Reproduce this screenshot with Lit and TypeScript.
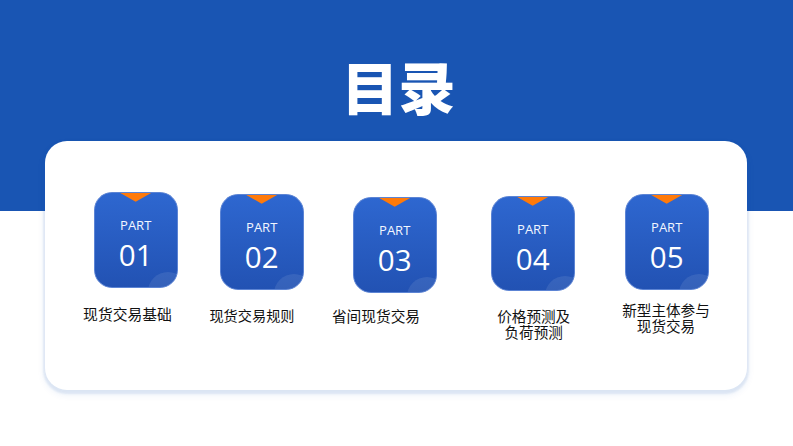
import { LitElement, html, css } from "lit";
import { customElement } from "lit/decorators.js";

interface Part { no: string; text: string; gap: number; top: number; h: number; labelGap: number; shift: number; size: number }

const PARTS: Part[] = [
  { no: "01", text: "现货交易基础", gap: 48.7, top: 50.7, h: 96, labelGap: 18, shift: -8.2, size: 14.8 },
  { no: "02", text: "现货交易规则", gap: 42, top: 52.7, h: 96, labelGap: 17, shift: -9.7, size: 14.2 },
  { no: "03", text: "省间现货交易", gap: 49, top: 55.7, h: 96, labelGap: 15, shift: -18.7, size: 14.7 },
  { no: "04", text: "价格预测及\n负荷预测", gap: 54, top: 54.7, h: 95, labelGap: 17, shift: 1, size: 14.6 },
  { no: "05", text: "新型主体参与\n现货交易", gap: 50, top: 52.7, h: 96, labelGap: 12, shift: -0.7, size: 14.6 },
];

@customElement("app-root")
export class AppRoot extends LitElement {
  static styles = css`
    :host { display: block; width: 793px; height: 446px; overflow: hidden; font-family: "Noto Sans CJK SC", "Open Sans", sans-serif; }
    .page { height: 446px; background: linear-gradient(#1955b3 211px, #fff 211px); display: flex; flex-direction: column; }
    .title { height: 141px; flex: none; display: flex; align-items: flex-start; justify-content: center; padding-left: 4px; padding-top: 55px; box-sizing: border-box; }
    h1 { margin: 0; color: #fff; font-size: 57px; line-height: 60px; font-weight: 900; }
    .card { margin-left: 45px; width: 702px; height: 249px; flex: none; background: #fff; border-radius: 22px;
      box-shadow: 0 2px 2px 2px rgba(25,85,179,.1), 0 4px 6px 2px rgba(25,85,179,.06); display: flex; align-items: flex-start; }
    .item { width: 84px; flex: none; display: flex; flex-direction: column; align-items: center; }
    .tile { width: 84px; flex: none; box-sizing: border-box; position: relative; overflow: hidden; border-radius: 18px;
      background: linear-gradient(#2e67d0, #2252b3); border: 1px solid #5c84d4; color: #fff;
      display: flex; flex-direction: column; align-items: center; font-family: "Open Sans", sans-serif; padding-top: 23px; }
    .tri { position: absolute; top: 0; left: 25px; width: 32px; height: 9px; background: #ff7a0a; clip-path: polygon(0 0, 100% 0, 50% 100%); }
    .blob { position: absolute; left: 53px; top: 79px; width: 40px; height: 40px; border-radius: 50%; background: rgba(255,255,255,.09); }
    .part { font-size: 13px; line-height: 18px; color: #f2f6ff; }
    .no { font-size: 29.5px; line-height: 40px; margin-top: 1px; }
    .label { flex: none; white-space: pre; text-align: center; color: #111; line-height: 16px; }
  `;

  render() {
    return html`<div class="page">
      <header class="title"><h1>目录</h1></header>
      <section class="card">
        ${PARTS.map((p) => html`
          <div class="item" style="margin-left:${p.gap}px;margin-top:${p.top}px">
            <div class="tile" style="height:${p.h}px">
              <span class="tri"></span><span class="blob"></span>
              <span class="part">PART</span>
              <span class="no">${p.no}</span>
            </div>
            <div class="label" style="margin-top:${p.labelGap}px;margin-left:${p.shift * 2}px;font-size:${p.size}px">${p.text}</div>
          </div>`)}
      </section>
    </div>`;
  }
}
